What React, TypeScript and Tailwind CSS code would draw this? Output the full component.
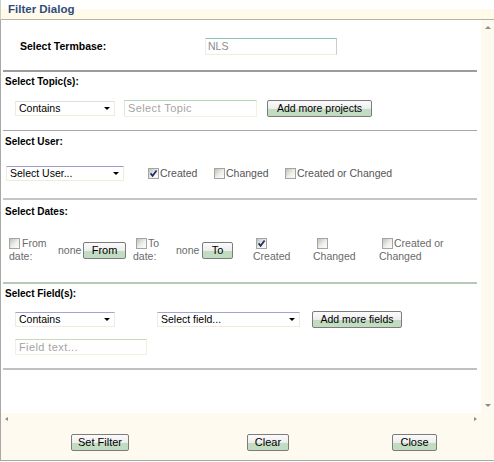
import React from 'react';

// Checkbox drawn as svg, greyed classic look
const Check = ({ checked }: { checked?: boolean }) => (
  <svg width="11" height="11" viewBox="0 0 11 11" className="shrink-0">
    <defs>
      <linearGradient id="cbg" x1="0" y1="0" x2="1" y2="1">
        <stop offset="0" stopColor="#b4c0b4" />
        <stop offset="0.55" stopColor="#eef0ec" />
        <stop offset="1" stopColor="#ffffff" />
      </linearGradient>
    </defs>
    <rect x="0.5" y="0.5" width="10" height="10" fill="url(#cbg)" stroke="#a4a4a4" />
    {checked && <path d="M2.6 5.4 L4.6 7.8 L8.6 2.6" fill="none" stroke="#1f2d6a" strokeWidth="1.7" />}
  </svg>
);

const Btn = ({ children, className = '' }: { children: React.ReactNode; className?: string }) => (
  <button
    className={`h-[17px] shrink-0 rounded-[2px] border border-[#7c7c7c] bg-[linear-gradient(to_bottom,#fbfbfb_0%,#ededed_52%,#c2dcc2_52%,#c2dcc2_100%)] text-[10.5px] leading-none text-black ${className}`}
  >
    {children}
  </button>
);

const Sel = ({ label, className = '' }: { label: string; className?: string }) => (
  <div
    className={`relative h-[15px] shrink-0 border border-[#f0ecdc] bg-white flex items-center pl-[3px] text-[10.5px] text-black ${className}`}
  >
    {label}
    <span className="absolute right-[4px] top-[5px] h-0 w-0 border-l-[3px] border-r-[3px] border-t-[3px] border-l-transparent border-r-transparent border-t-black" />
  </div>
);

const Sep = ({ className = '' }: { className?: string }) => <div className={`ml-[2px] w-[474px] ${className}`} />;

const Head = ({ children, className = '' }: { children: React.ReactNode; className?: string }) => (
  <div className={`ml-[4px] text-[10px] leading-[12px] font-bold text-black ${className}`}>{children}</div>
);

export default function App() {
  return (
    <div className="w-[494px] h-[462px] flex flex-col bg-white font-['Liberation_Sans',Arial,sans-serif]">
      {/* barra de titulo */}
      <div className="h-[20px] shrink-0 border-l border-[#c4d4c4] border-b border-b-[#b4b4a4] bg-[linear-gradient(to_bottom,#ffffff_50%,#fffaea_50%)] pl-[7px] flex items-center text-[11.5px] font-bold text-[#2f4c7c]">
        Filter Dialog
      </div>

      <div className="flex flex-col border-l border-[#a8a8a8]">
        <div className="flex h-[393px]">
          <div className="w-[480px] bg-white flex flex-col">
            {/* termbase */}
            <div className="mt-[18px] flex h-[17px] items-center pl-[19px]">
              <div className="w-[185px] text-[10.5px] font-bold text-black">Select Termbase:</div>
              <div className="w-[132px] h-[17px] border border-[#f2eedd] border-t-[#8fc2b6] border-r-[#cccccc] flex items-center pl-[2px] text-[10.5px] text-[#8c8c8c]">
                NLS
              </div>
            </div>
            <Sep className="mt-[15px] h-[2px] bg-[#9c9c9c]" />

            {/* topics */}
            <Head className="mt-[4px]">Select Topic(s):</Head>
            <div className="mt-[12px] flex h-[17px] items-center">
              <Sel label="Contains" className="ml-[14px] w-[100px] border-t-[#dcdce4]" />
              <div className="ml-[9px] w-[133px] h-[17px] border border-[#f2f0e2] border-t-[#b4d8b4] border-l-[#dcecdc] flex items-center pl-[3px] text-[11px] tracking-[0.4px] text-[#a4a4a4]">
                Select Topic
              </div>
              <Btn className="ml-[10px] w-[105px]">Add more projects</Btn>
            </div>
            <Sep className="mt-[13px] h-[1px] bg-[#a8a8a8]" />

            {/* user */}
            <Head className="mt-[5px]">Select User:</Head>
            <div className="mt-[18px] flex h-[15px] items-center text-[10.5px] text-[#555555]">
              <Sel label="Select User..." className="ml-[5px] w-[118px] border-t-[#9c9ccc]" />
              <div className="ml-[24px] w-[66px] flex items-center gap-[1px]">
                <Check checked />
                <span>Created</span>
              </div>
              <div className="w-[71px] flex items-center gap-[1px]">
                <Check />
                <span>Changed</span>
              </div>
              <div className="flex items-center gap-[1px]">
                <Check />
                <span>Created or Changed</span>
              </div>
            </div>
            <Sep className="mt-[17px] h-[2px] bg-[#c4c4c4]" />

            {/* dates */}
            <Head className="mt-[6px]">Select Dates:</Head>
            <div className="mt-[19px] flex h-[26px] items-center text-[10.5px] leading-[13px] text-[#6a6a6a]">
              <div className="ml-[8px] w-[49px]">
                <div className="flex h-[13px] items-center">
                  <Check />
                  <span className="ml-[2px]">From</span>
                </div>
                <div>date:</div>
              </div>
              <span className="w-[25px]">none</span>
              <Btn className="w-[43px] text-[11px]">From</Btn>
              <div className="ml-[7px] w-[43px]">
                <div className="flex h-[13px] items-center pl-[3px]">
                  <Check />
                  <span className="ml-[1px]">To</span>
                </div>
                <div>date:</div>
              </div>
              <span className="w-[26px]">none</span>
              <Btn className="w-[31px] text-[11px]">To</Btn>
              <div className="ml-[20px] w-[60px]">
                <div className="flex h-[13px] items-center pl-[3px]">
                  <Check checked />
                </div>
                <div>Created</div>
              </div>
              <div className="w-[66px]">
                <div className="flex h-[13px] items-center pl-[4px]">
                  <Check />
                </div>
                <div>Changed</div>
              </div>
              <div>
                <div className="flex h-[13px] items-center pl-[3px]">
                  <Check />
                  <span className="ml-[1px]">Created or</span>
                </div>
                <div>Changed</div>
              </div>
            </div>
            <Sep className="mt-[19px] h-[2px] bg-[#b8c8b8]" />

            {/* fields */}
            <Head className="mt-[4px]">Select Field(s):</Head>
            <div className="mt-[11px] flex h-[17px] items-center">
              <Sel label="Contains" className="ml-[14px] w-[100px] border-t-[#a4a4d4]" />
              <Sel label="Select field..." className="ml-[42px] w-[143px] border-t-[#a4a4d4]" />
              <Btn className="ml-[12px] w-[90px]">Add more fields</Btn>
            </div>
            <div className="mt-[11px] ml-[14px] w-[132px] h-[16px] border border-[#f4f0e0] border-t-[#c8d8c0] flex items-center pl-[3px] text-[11px] tracking-[0.4px] text-[#a4a4a4]">
              Field text...
            </div>
            <Sep className="mt-[13px] h-[2px] bg-[#c0c0c0]" />
          </div>

          {/* scrollbar vertical */}
          <div className="w-[13px] bg-[#fffaef] flex flex-col items-center justify-between pt-[6px] pb-[6px] pl-[1px]">
            <span className="h-0 w-0 border-l-[3px] border-r-[3px] border-b-[3px] border-l-transparent border-r-transparent border-b-[#8c8c8c]" />
            <span className="h-0 w-0 border-l-[3px] border-r-[3px] border-t-[3px] border-l-transparent border-r-transparent border-t-[#8c8c8c]" />
          </div>
        </div>

        {/* scrollbar horizontal */}
        <div className="h-[15px] bg-[#fffaef] flex">
          <div className="w-[480px] flex justify-between items-start pt-[4px] px-[4px]">
            <span className="h-0 w-0 border-t-[2.5px] border-b-[2.5px] border-r-[3px] border-t-transparent border-b-transparent border-r-[#8c8c8c]" />
            <span className="h-0 w-0 border-t-[2.5px] border-b-[2.5px] border-l-[3px] border-t-transparent border-b-transparent border-l-[#8c8c8c]" />
          </div>
        </div>

        {/* botones */}
        <div className="h-[33px] bg-[#fffaef] border-b border-[#a8a8a8] flex items-start pt-[6px]">
          <Btn className="ml-[70px] w-[58px] text-[11px]">Set Filter</Btn>
          <Btn className="ml-[118px] w-[42px] text-[11px]">Clear</Btn>
          <Btn className="ml-[103px] w-[45px] text-[11px]">Close</Btn>
        </div>
      </div>
    </div>
  );
}
